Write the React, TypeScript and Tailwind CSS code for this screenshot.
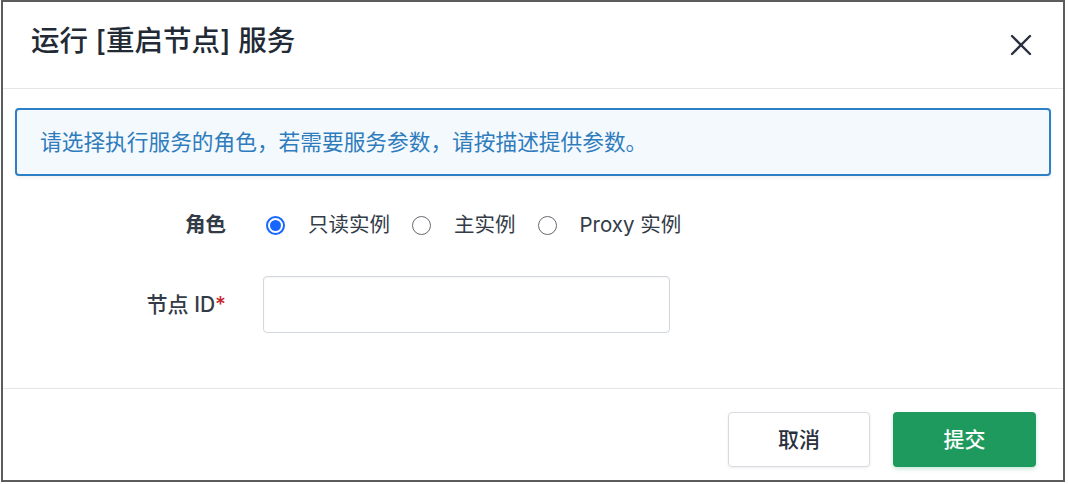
import { X } from "lucide-react";

const font = { fontFamily: 'Inter, "Noto Sans CJK SC", sans-serif' };

function Radio({ checked, label }: { checked?: boolean; label: string }) {
  return (
    <label className="flex items-center gap-[23px]">
      {checked ? (
        <span className="flex h-[19px] w-[19px] items-center justify-center rounded-full border-2 border-[#1766ff]">
          <span className="h-[11px] w-[11px] rounded-full bg-[#1766ff]" />
        </span>
      ) : (
        <span className="h-[19px] w-[19px] rounded-full border-[1.5px] border-[#666a70]" />
      )}
      <span className="text-[20.5px] text-[#333b47]">{label}</span>
    </label>
  );
}

export default function App() {
  return (
    <div className="h-[484px] w-[1068px] bg-white" style={font}>
      <div className="ml-px flex h-[482px] w-[1064px] flex-col border-2 border-[#5b5c5e] bg-white">
        {/* Header */}
        <div className="flex h-[87px] shrink-0 items-center justify-between border-b border-[#e4e6e9] pl-[28px] pr-[24px]">
          <h1 className="-mt-[8px] text-[28.5px] font-medium text-[#222a35]">运行 [重启节点] 服务</h1>
          <X className="h-[36px] w-[36px] text-[#2b3040]" strokeWidth={1.6} />
        </div>

        {/* Body */}
        <div className="flex-1 px-[12px] pt-[19px]">
          <div className="flex h-[68px] items-center rounded-[4px] border-2 border-[#2d80c6] bg-[#f4f9fe] pl-[23px] shadow-[0_2px_4px_rgba(0,0,0,0.06)]">
            <p className="text-[21.7px] text-[#2f7cbd]">请选择执行服务的角色，若需要服务参数，请按描述提供参数。</p>
          </div>

          <div className="mt-[34px] flex h-[30px] items-center">
            <div className="w-[211px] text-right text-[20.5px] font-bold text-[#333b47]">角色</div>
            <div className="ml-[40px] flex items-center gap-[22px]">
              <Radio checked label="只读实例" />
              <Radio label="主实例" />
              <Radio label="Proxy 实例" />
            </div>
          </div>

          <div className="mt-[36px] flex items-center">
            <div className="w-[211px] text-right text-[21px] font-medium text-[#333b47]">
              节点 ID<span className="text-[#c8262c]">*</span>
            </div>
            <input
              className="ml-[37px] h-[57px] w-[407px] rounded-[4px] border border-[#d2d7dd] bg-white px-3 text-[20px] shadow-[inset_0_1px_2px_rgba(0,0,0,0.04)] outline-none"
              type="text"
            />
          </div>
        </div>

        {/* Footer */}
        <div className="flex h-[92px] shrink-0 justify-end gap-[23px] border-t border-[#e4e6e9] pr-[27px] pt-[23px]">
          <button className="h-[55px] w-[142px] rounded-[4px] border border-[#d8dce1] bg-white text-[21px] font-medium text-[#2a313c] shadow-[0_1px_3px_rgba(0,0,0,0.08)]">
            取消
          </button>
          <button className="h-[55px] w-[143px] rounded-[4px] bg-[#1f9a5e] text-[21px] font-medium text-white shadow-[0_2px_4px_rgba(31,154,94,0.25)]">
            提交
          </button>
        </div>
      </div>
    </div>
  );
}
